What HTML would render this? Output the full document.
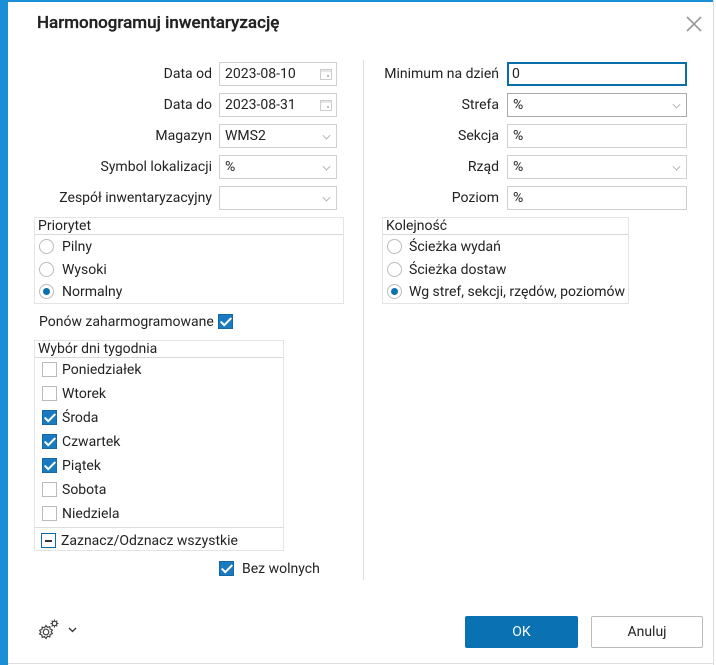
<!DOCTYPE html>
<html><head><meta charset="utf-8"><style>
*{box-sizing:border-box;margin:0;padding:0}
body{width:716px;height:665px;background:#fff;font-family:"Roboto","Liberation Sans",sans-serif;font-size:14px;color:#222;position:relative;overflow:hidden}
.a{position:absolute}
.lbl{position:absolute;text-align:right;width:200px;line-height:24px}
.inp{position:absolute;height:24px;border:1px solid #d0d0d0;background:#fff;line-height:22px;padding-left:5px;font-size:14px}
.chev{position:absolute;right:6px;top:7px;width:7px;height:7px;border-right:1px solid #aaa;border-bottom:1px solid #aaa;transform:rotate(45deg) scale(.8)}
.grp{position:absolute;border:1px solid #e4e4e4}
.gh{height:17px;line-height:17px;padding-left:3px;border-bottom:1px solid #d8d8d8;font-size:14px}
.rad{position:absolute;width:15px;height:15px;border:1px solid #bbb;border-radius:50%;background:#fff}
.rad.on::after{content:"";position:absolute;left:3px;top:3px;width:7px;height:7px;border-radius:50%;background:#0a6fb0}
.cb{position:absolute;width:15px;height:15px;border:1px solid #bbb;background:#fff}
.cb.on{background:#1a7ac0;border-color:#1567a3}
.cb.on::after{content:"";position:absolute;left:4px;top:0px;width:4px;height:9px;border-right:2px solid #fff;border-bottom:2px solid #fff;transform:rotate(45deg)}
.t{position:absolute;line-height:20px;margin-top:1px}
</style></head><body>
<div class="a" style="left:0;top:0;width:8px;height:665px;background:#1a8fd8"></div>
<div class="a" style="left:0;top:0;width:713px;height:2px;background:#1a8fd8"></div>
<div class="a" style="left:713px;top:0;width:1px;height:665px;background:#ddd"></div>
<div class="a" style="left:8px;top:663px;width:705px;height:1px;background:#ddd"></div>
<div class="a" style="left:37px;top:12px;font-size:17px;font-weight:500;-webkit-text-stroke:0.3px #222;color:#222;line-height:22px">Harmonogramuj inwentaryzację</div>
<svg class="a" style="left:686px;top:16px" width="16" height="16"><path d="M1 1L15 15M15 1L1 15" stroke="#999" stroke-width="1.6"/></svg>

<div class="lbl" style="left:12px;top:62px">Data od</div>
<div class="lbl" style="left:12px;top:93px">Data do</div>
<div class="lbl" style="left:12px;top:124px">Magazyn</div>
<div class="lbl" style="left:12px;top:155px">Symbol lokalizacji</div>
<div class="lbl" style="left:12px;top:186px">Zespół inwentaryzacyjny</div>
<div class="inp" style="left:219px;top:62px;width:118px">2023-08-10<svg class="a" style="right:4px;top:5px" width="12" height="12"><rect x=".5" y="1.5" width="11" height="10" fill="none" stroke="#ccc"/><line x1="0" y1="3" x2="12" y2="3" stroke="#ccc"/><rect x="7" y="7" width="2" height="2" fill="#bbb"/></svg></div>
<div class="inp" style="left:219px;top:93px;width:118px">2023-08-31<svg class="a" style="right:4px;top:5px" width="12" height="12"><rect x=".5" y="1.5" width="11" height="10" fill="none" stroke="#ccc"/><line x1="0" y1="3" x2="12" y2="3" stroke="#ccc"/><rect x="7" y="7" width="2" height="2" fill="#bbb"/></svg></div>
<div class="inp" style="left:219px;top:124px;width:118px">WMS2<div class="chev"></div></div>
<div class="inp" style="left:219px;top:155px;width:118px">%<div class="chev"></div></div>
<div class="inp" style="left:219px;top:186px;width:118px"><div class="chev"></div></div>

<div class="a" style="left:363px;top:60px;width:1px;height:520px;background:#e0e0e0"></div>

<div class="lbl" style="left:299px;top:62px">Minimum na dzień</div>
<div class="lbl" style="left:299px;top:93px">Strefa</div>
<div class="lbl" style="left:299px;top:124px">Sekcja</div>
<div class="lbl" style="left:299px;top:155px">Rząd</div>
<div class="lbl" style="left:299px;top:186px">Poziom</div>
<div class="inp" style="left:507px;top:62px;width:180px;border:2px solid #0a6fa8;line-height:20px;padding-left:3px">0</div>
<div class="inp" style="left:507px;top:93px;width:180px;border-color:#aaa">%<div class="chev"></div></div>
<div class="inp" style="left:507px;top:124px;width:180px">%</div>
<div class="inp" style="left:507px;top:155px;width:180px">%<div class="chev"></div></div>
<div class="inp" style="left:507px;top:186px;width:180px">%</div>

<div class="grp" style="left:34px;top:217px;width:310px;height:87px"><div class="gh">Priorytet</div></div>
<div class="rad" style="left:39px;top:239px"></div><div class="t" style="left:62px;top:236px">Pilny</div>
<div class="rad" style="left:39px;top:262px"></div><div class="t" style="left:62px;top:259px">Wysoki</div>
<div class="rad on" style="left:39px;top:284px"></div><div class="t" style="left:62px;top:281px">Normalny</div>

<div class="grp" style="left:382px;top:217px;width:247px;height:87px"><div class="gh">Kolejność</div></div>
<div class="rad" style="left:387px;top:239px"></div><div class="t" style="left:409px;top:236px">Ścieżka wydań</div>
<div class="rad" style="left:387px;top:262px"></div><div class="t" style="left:409px;top:259px">Ścieżka dostaw</div>
<div class="rad on" style="left:387px;top:284px"></div><div class="t" style="left:409px;top:281px;width:218px;overflow:hidden;white-space:nowrap">Wg stref, sekcji, rzędów, poziomów</div>

<div class="t" style="left:39px;top:311px">Ponów zaharmogramowane</div>
<div class="cb on" style="left:218px;top:314px"></div>

<div class="grp" style="left:34px;top:340px;width:250px;height:211px"><div class="gh">Wybór dni tygodnia</div></div>
<div class="cb" style="left:42px;top:362px"></div><div class="t" style="left:62px;top:359px">Poniedziałek</div>
<div class="cb" style="left:42px;top:386px"></div><div class="t" style="left:62px;top:383px">Wtorek</div>
<div class="cb on" style="left:42px;top:410px"></div><div class="t" style="left:62px;top:407px">Środa</div>
<div class="cb on" style="left:42px;top:434px"></div><div class="t" style="left:62px;top:431px">Czwartek</div>
<div class="cb on" style="left:42px;top:458px"></div><div class="t" style="left:62px;top:455px">Piątek</div>
<div class="cb" style="left:42px;top:482px"></div><div class="t" style="left:62px;top:479px">Sobota</div>
<div class="cb" style="left:42px;top:506px"></div><div class="t" style="left:62px;top:503px">Niedziela</div>
<div class="a" style="left:35px;top:527px;width:248px;height:1px;background:#ddd"></div>
<div class="cb" style="left:41px;top:533px;border-color:#1567a3"><div class="a" style="left:3px;top:6px;width:7px;height:1.5px;background:#333"></div></div><div class="t" style="left:61px;top:530px">Zaznacz/Odznacz wszystkie</div>

<div class="cb on" style="left:219px;top:561px"></div><div class="t" style="left:242px;top:558px">Bez wolnych</div>

<svg class="a" style="left:36px;top:618px" width="24" height="24" fill="none" stroke="#444" stroke-width="1.2">
<circle cx="10" cy="14" r="2.8"/>
<path d="M10 7.5l1.5 1.9 2.3-.7.3 2.3 2.3 1-1.2 1.8 1.2 1.8-2.3 1-.3 2.3-2.3-.7L10 20.5l-1.5-1.9-2.3.7-.3-2.3-2.3-1 1.2-1.8-1.2-1.8 2.3-1 .3-2.3 2.3.7z"/>
<circle cx="18.5" cy="5.5" r="2.2"/><path d="M18.5 1.5v1.5M18.5 8v1.5M14.5 5.5h1.5M21 5.5h1.5M15.7 2.7l1 1M20.3 7.3l1 1M15.7 8.3l1-1M20.3 3.7l1-1"/></svg>
<svg class="a" style="left:68px;top:627px" width="9" height="6"><path d="M1 1l3.5 3.5L8 1" stroke="#333" stroke-width="1.3" fill="none"/></svg>

<div class="a" style="left:465px;top:616px;width:113px;height:32px;background:#0a72b3;border-radius:2px;color:#fff;text-align:center;line-height:32px;font-size:14px">OK</div>
<div class="a" style="left:591px;top:616px;width:112px;height:32px;border:1px solid #bbb;border-radius:2px;text-align:center;line-height:30px;font-size:14px">Anuluj</div>
</body></html>
